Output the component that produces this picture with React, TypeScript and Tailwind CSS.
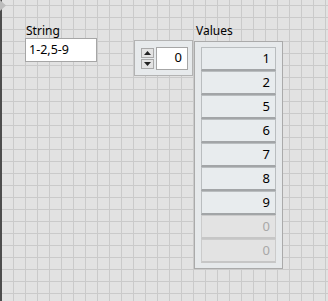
import React from "react";

const font = { fontFamily: '"Noto Sans", "Open Sans", sans-serif' };

function ArrayElem({ v, empty }: { v: string; empty?: boolean }) {
  return empty ? (
    <div className="h-[24px] w-[75px] bg-[#e3e3e3] border border-[#cbcbcb] border-b-2 border-b-[#c6c6c6] flex items-center justify-end pr-[5px] text-[13px] leading-none text-[#a8a8a8]">
      {v}
    </div>
  ) : (
    <div className="h-[24px] w-[75px] bg-[#e8ecee] border border-[#b9bdbf] border-b-2 border-b-[#a2a5a7] flex items-center justify-end pr-[5px] text-[13px] leading-none text-black">
      {v}
    </div>
  );
}

export default function App() {
  const vals = ["1", "2", "5", "6", "7", "8", "9"];
  return (
    <div
      className="relative w-[328px] h-[301px] overflow-hidden flex bg-[#e2e2e2] bg-[linear-gradient(to_right,#cacaca_1px,transparent_1px),linear-gradient(to_bottom,#cacaca_1px,transparent_1px)] bg-[size:12px_12px] bg-[position:1px_5px]"
      style={font}
    >
      <div className="w-[2px] h-full bg-[#4d4d4d] shrink-0" />
      <svg className="absolute left-0 top-0" width="6" height="11" viewBox="0 0 6 11">
        <polygon points="0,0 6,5.5 0,11" fill="#bdbdbd" />
      </svg>
      <div className="flex items-start pt-[24px]">
        <div className="ml-[23px] flex flex-col w-[72px]">
          <div className="h-[14px] leading-[14px] text-[12px] text-black pl-[1px]">String</div>
          <div className="h-[24px] bg-white border border-[#a6a6a6] flex items-center pl-[3px] text-[12.5px] text-black">
            1-2,5-9
          </div>
        </div>
        <div className="ml-[37px] mt-[16px] w-[59px] h-[36px] bg-[#e7eaec] border border-[#b3b3b3] flex items-center pl-[6px]">
          <div className="flex flex-col gap-[1px]">
            <div className="w-[13px] h-[10px] bg-[#e3e3e3] border border-[#a9a9a9] flex items-center justify-center">
              <svg width="7" height="4" viewBox="0 0 7 4"><polygon points="0,4 3.5,0 7,4" fill="#222" /></svg>
            </div>
            <div className="w-[13px] h-[10px] bg-[#e3e3e3] border border-[#a9a9a9] flex items-center justify-center">
              <svg width="7" height="4" viewBox="0 0 7 4"><polygon points="0,0 3.5,4 7,0" fill="#222" /></svg>
            </div>
          </div>
          <div className="ml-[2px] w-[32px] h-[23px] bg-white border border-[#a6a6a6] flex items-center justify-end pr-[5px] text-[13px] text-black">
            0
          </div>
        </div>
        <div className="ml-[1px] flex flex-col">
          <div className="h-[17px] leading-[14px] text-[12px] text-black pl-[2px]">Values</div>
          <div className="w-[89px] bg-[#e6e9eb] border border-[#aaaaaa] pl-[6px] pt-[5px] pb-[5px]">
            {vals.map((v) => (
              <ArrayElem key={v} v={v} />
            ))}
            <ArrayElem v="0" empty />
            <ArrayElem v="0" empty />
          </div>
        </div>
      </div>
    </div>
  );
}
